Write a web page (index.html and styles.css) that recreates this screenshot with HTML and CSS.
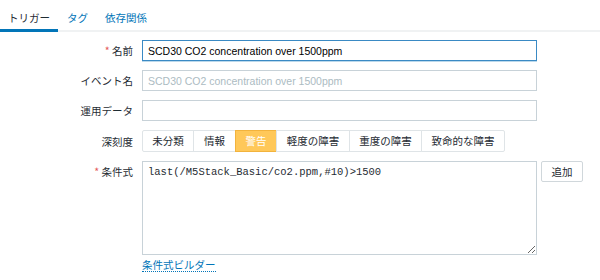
FILE: index.html
```html
<!DOCTYPE html>
<html lang="ja">
<head>
<meta charset="utf-8">
<link rel="stylesheet" href="styles.css">
</head>
<body>
<div class="tabs">
  <a class="tab active">トリガー</a>
  <a class="tab">タグ</a>
  <a class="tab">依存関係</a>
</div>
<div class="form">
  <div class="row">
    <label class="lbl"><span class="req">*</span> 名前</label>
    <div class="field"><input class="inp focus" type="text" value="SCD30 CO2 concentration over 1500ppm"></div>
  </div>
  <div class="row">
    <label class="lbl">イベント名</label>
    <div class="field"><input class="inp" type="text" placeholder="SCD30 CO2 concentration over 1500ppm"></div>
  </div>
  <div class="row">
    <label class="lbl">運用データ</label>
    <div class="field"><input class="inp" type="text"></div>
  </div>
  <div class="row">
    <label class="lbl">深刻度</label>
    <div class="field sev">
      <span class="sbtn">未分類</span><span class="sbtn">情報</span><span class="sbtn on">警告</span><span class="sbtn">軽度の障害</span><span class="sbtn">重度の障害</span><span class="sbtn">致命的な障害</span>
    </div>
  </div>
  <div class="row top">
    <label class="lbl"><span class="req">*</span> 条件式</label>
    <div class="field">
      <div class="exprrow">
        <textarea class="ta">last(/M5Stack_Basic/co2.ppm,#10)&gt;1500</textarea>
        <button class="add">追加</button>
      </div>
      <a class="builder">条件式ビルダー</a>
    </div>
  </div>
</div>
</body>
</html>
```

FILE: styles.css
```css
* { box-sizing: border-box; }
html, body { margin: 0; padding: 0; background: #fff; }
body {
  font-family: "Liberation Sans", Arial, "Noto Sans CJK JP", sans-serif;
  font-size: 10.5px;
  color: #1f2c33;
}
.tabs {
  display: flex;
  height: 32px;
  border-bottom: 2px solid #f0f2f3;
}
.tab {
  display: flex;
  align-items: center;
  padding: 5px 8px 0 8px;
  color: #0275b8;
  font-family: "Noto Sans CJK JP", sans-serif;
  font-size: 10.5px;
  height: 32px;
  white-space: nowrap;
  border-bottom: 3px solid transparent;
}
.tab + .tab { margin-left: 1px; }
.tab.active {
  color: #1f2c33;
  border-bottom: 3px solid #0275b8;
}
.form {
  padding-top: 8px;
  display: flex;
  flex-direction: column;
  gap: 9px;
}
.row {
  display: flex;
  align-items: center;
}
.row.top { align-items: flex-start; }
.lbl {
  width: 133px;
  text-align: right;
  margin-right: 9px;
  line-height: 21px;
  font-family: "Noto Sans CJK JP", sans-serif;
  font-size: 10.5px;
}
.req { color: #e45959; }
.field { width: 395px; }
.inp {
  width: 395px;
  height: 21px;
  border: 1px solid #c8d2d8;
  padding: 0 5px;
  font-family: "Liberation Sans", Arial, sans-serif;
  font-size: 10.5px;
  color: #1f2c33;
  outline: none;
  display: block;
}
.inp::placeholder { color: #acbbc2; }
.inp.focus { border-color: #3a8ac4; box-shadow: 0 1px 0 #bcd9ec; color: #000; }
.sev { display: flex; width: auto; }
.sbtn {
  display: block;
  height: 22px;
  line-height: 20px;
  padding: 0;
  text-align: center;
  border: 1px solid #dfe4e7;
  margin-left: -1px;
  background: #fff;
  color: #1f2c33;
  font-family: "Noto Sans CJK JP", sans-serif;
  font-size: 10.5px;
  white-space: nowrap;
}
.sbtn:nth-child(1) { width: 52px; margin-left: 0; border-radius: 2px 0 0 2px; }
.sbtn:nth-child(2) { width: 43px; }
.sbtn:nth-child(3) { width: 42px; }
.sbtn:nth-child(4) { width: 74px; }
.sbtn:nth-child(5) { width: 73px; }
.sbtn:nth-child(6) { width: 84px; border-radius: 0 2px 2px 0; }
.sbtn.on { background: #ffc859; border-color: #f2b33d; color: #fff; }
.exprrow { display: flex; align-items: flex-start; gap: 4px; width: 450px; }
.ta {
  width: 395px;
  height: 94px;
  border: 1px solid #c8d2d8;
  padding: 4px 5px;
  font-family: "Liberation Mono", "Courier New", monospace;
  font-size: 10.5px;
  color: #1f2c33;
  resize: both;
  margin: 0;
  display: block;
}
.add {
  width: 42px;
  height: 21px;
  border: 1px solid #d0d7db;
  border-radius: 2px;
  background: #fff;
  color: #1f2c33;
  font-family: "Noto Sans CJK JP", sans-serif;
  font-size: 10.5px;
  padding: 0;
}
.builder {
  display: inline-block;
  margin-top: 3px;
  color: #0275b8;
  border-bottom: 1px dotted #0275b8;
  line-height: 13px;
  font-family: "Noto Sans CJK JP", sans-serif;
  font-size: 10.5px;
}
```
